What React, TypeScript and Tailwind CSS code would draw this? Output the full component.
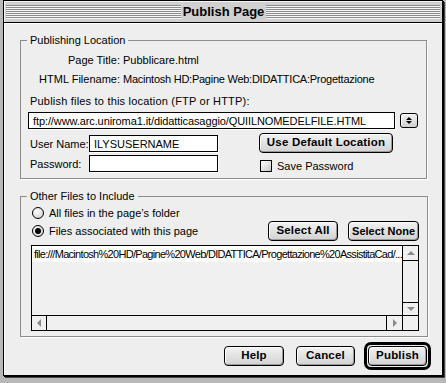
import React from "react";

const btn =
  "flex items-center justify-center h-[20px] border border-black rounded-[4px] bg-[linear-gradient(#f2f2f2,#d2d2d2)] shadow-[inset_1px_1px_0_#fff,inset_-1px_-1px_0_#9a9a9a] font-bold text-[11.5px] tracking-[0.2px] leading-none whitespace-nowrap";

const field = "h-[17px] border border-black bg-white shadow-[1px_1px_0_#fff] flex items-center px-[4px]";

function Stripes({ className }: { className: string }) {
  return (
    <div
      className={`h-[14px] bg-[repeating-linear-gradient(#8c8c8c_0_1px,#f6f6f6_1px_2px)] ${className}`}
    />
  );
}

function Radio({ checked }: { checked?: boolean }) {
  return (
    <span className="w-[12px] h-[12px] rounded-full border border-black bg-[radial-gradient(circle_at_35%_35%,#fff,#c8c8c8)] flex items-center justify-center">
      {checked && <span className="w-[6px] h-[6px] rounded-full bg-black" />}
    </span>
  );
}

function Arrow({ dir }: { dir: "up" | "down" | "left" | "right" }) {
  const pts = {
    up: "0,5 4,1 8,5",
    down: "0,1 4,5 8,1",
    left: "5,0 1,4 5,8",
    right: "1,0 5,4 1,8",
  }[dir];
  const w = dir === "up" || dir === "down" ? 8 : 6;
  const h = dir === "up" || dir === "down" ? 6 : 8;
  return (
    <svg width={w} height={h} viewBox={`0 0 ${w} ${h}`}>
      <polygon points={pts} fill="#8a8a8a" />
    </svg>
  );
}

export default function App() {
  return (
    <div
      className="w-[446px] h-[383px] bg-[#b8b8b8] overflow-hidden text-black text-[11px] leading-[14px]"
      style={{ fontFamily: '"Liberation Sans", Arial, sans-serif' }}
    >
      <div className="ml-[3px] w-[440px] h-[376px] border border-black bg-[#eeeeee] shadow-[1px_1px_0_#000,2px_2px_0_#444] flex flex-col">
        {/* Title bar */}
        <div className="h-[22px] shrink-0 border-b border-black bg-[#d0d0d0] shadow-[inset_1px_1px_0_#f4f4f4] flex items-center px-[2px]">
          <Stripes className="w-[175px]" />
          <div className="flex-1 text-center font-bold text-[13px] leading-none">Publish Page</div>
          <Stripes className="w-[174px]" />
        </div>

        {/* Body */}
        <div className="flex-1 pl-[16px] pr-[15px] pt-[10px] shadow-[inset_1px_1px_0_#fff]">
          <fieldset className="border border-[#8c8c8c] shadow-[1px_1px_0_#fff] pl-[6px] pr-[7px] pb-[5px]">
            <legend className="px-[3px] leading-[14px]">Publishing Location</legend>
            <div className="mt-[6px] flex gap-[3px]">
              <span className="w-[93px] text-right">Page Title:</span>
              <span>Pubblicare.html</span>
            </div>
            <div className="mt-[5px] flex gap-[3px]">
              <span className="w-[93px] text-right">HTML Filename:</span>
              <span className="tracking-[-0.25px]">Macintosh HD:Pagine Web:DIDATTICA:Progettazione</span>
            </div>
            <div className="mt-[8px] ml-[3px] tracking-[0.2px]">Publish files to this location (FTP or HTTP):</div>
            <div className="mt-[4px] ml-[1px] flex items-center gap-[5px]">
              <div className={`${field} w-[367px] tracking-[-0.1px]`}>ftp://www.arc.uniroma1.it/didatticasaggio/QUIILNOMEDELFILE.HTML</div>
              <div className="w-[18px] h-[15px] border border-black rounded-[3px] bg-[linear-gradient(#f2f2f2,#d0d0d0)] shadow-[inset_1px_1px_0_#fff] flex flex-col items-center justify-center gap-[1px]">
                <svg width="6" height="3" viewBox="0 0 6 3"><polygon points="0,3 3,0 6,3" fill="#000" /></svg>
                <svg width="6" height="3" viewBox="0 0 6 3"><polygon points="0,0 3,3 6,0" fill="#000" /></svg>
              </div>
            </div>
            <div className="mt-[6px] flex">
              <div className="flex flex-col gap-[3px]">
                <div className="flex items-center">
                  <span className="w-[59px] ml-[3px]">User Name:</span>
                  <div className={`${field} w-[129px]`}>ILYSUSERNAME</div>
                </div>
                <div className="flex items-center">
                  <span className="w-[59px] ml-[3px]">Password:</span>
                  <div className={`${field} w-[129px]`} />
                </div>
              </div>
              <div className="ml-[41px] -mt-[2px] flex flex-col">
                <div className={`${btn} w-[134px] h-[19px]`}>Use Default Location</div>
                <div className="mt-[6px] ml-[1px] flex items-center gap-[5px]">
                  <span className="w-[12px] h-[12px] border border-black bg-[linear-gradient(135deg,#fff,#c8c8c8)]" />
                  <span>Save Password</span>
                </div>
              </div>
            </div>
          </fieldset>

          <fieldset className="mt-[10px] border border-[#8c8c8c] shadow-[1px_1px_0_#fff] pl-[6px] pr-[8px] pb-[5px]">
            <legend className="px-[3px] leading-[14px]">Other Files to Include</legend>
            <div className="mt-[3px] ml-[5px] flex items-center gap-[5px] h-[14px]">
              <Radio />
              <span>All files in the page’s folder</span>
            </div>
            <div className="mt-[1px] flex items-center justify-between">
              <div className="ml-[5px] flex items-center gap-[5px]">
                <Radio checked />
                <span>Files associated with this page</span>
              </div>
              <div className="flex gap-[10px]">
                <div className={`${btn} w-[70px]`}>Select All</div>
                <div className={`${btn} w-[71px] !text-[11px] !tracking-normal`}>Select None</div>
              </div>
            </div>
            <div className="mt-[4px] ml-[4px] h-[86px] border border-black bg-[#f0f0f0] flex flex-col">
              <div className="flex-1 flex">
                <div className="flex-1 min-w-0">
                  <div className="bg-white h-[16px] pl-[2px] flex items-center tracking-[-0.7px] whitespace-nowrap overflow-hidden">
                    file:///Macintosh%20HD/Pagine%20Web/DIDATTICA/Progettazione%20AssistitaCad/...
                  </div>
                </div>
                <div className="w-[16px] border-l border-black flex flex-col">
                  <div className="h-[15px] border-b border-black flex items-center justify-center">
                    <Arrow dir="up" />
                  </div>
                  <div className="flex-1" />
                  <div className="h-[13px] border-t border-black flex items-center justify-center">
                    <Arrow dir="down" />
                  </div>
                </div>
              </div>
              <div className="h-[15px] border-t border-black flex">
                <div className="w-[15px] border-r border-black flex items-center justify-center">
                  <Arrow dir="left" />
                </div>
                <div className="flex-1" />
                <div className="w-[16px] border-l border-black flex items-center justify-center">
                  <Arrow dir="right" />
                </div>
                <div className="w-[16px] border-l border-black" />
              </div>
            </div>
          </fieldset>

          <div className="mt-[5px] -mr-[4px] flex items-center justify-end">
            <div className={`${btn} w-[60px] h-[19px]`}>Help</div>
            <div className={`${btn} w-[59px] h-[19px] ml-[12px]`}>Cancel</div>
            <div className="ml-[9px] border-[3px] border-black rounded-[7px] p-[1px]">
              <div className={`${btn} w-[59px]`}>Publish</div>
            </div>
          </div>
        </div>
      </div>
    </div>
  );
}
